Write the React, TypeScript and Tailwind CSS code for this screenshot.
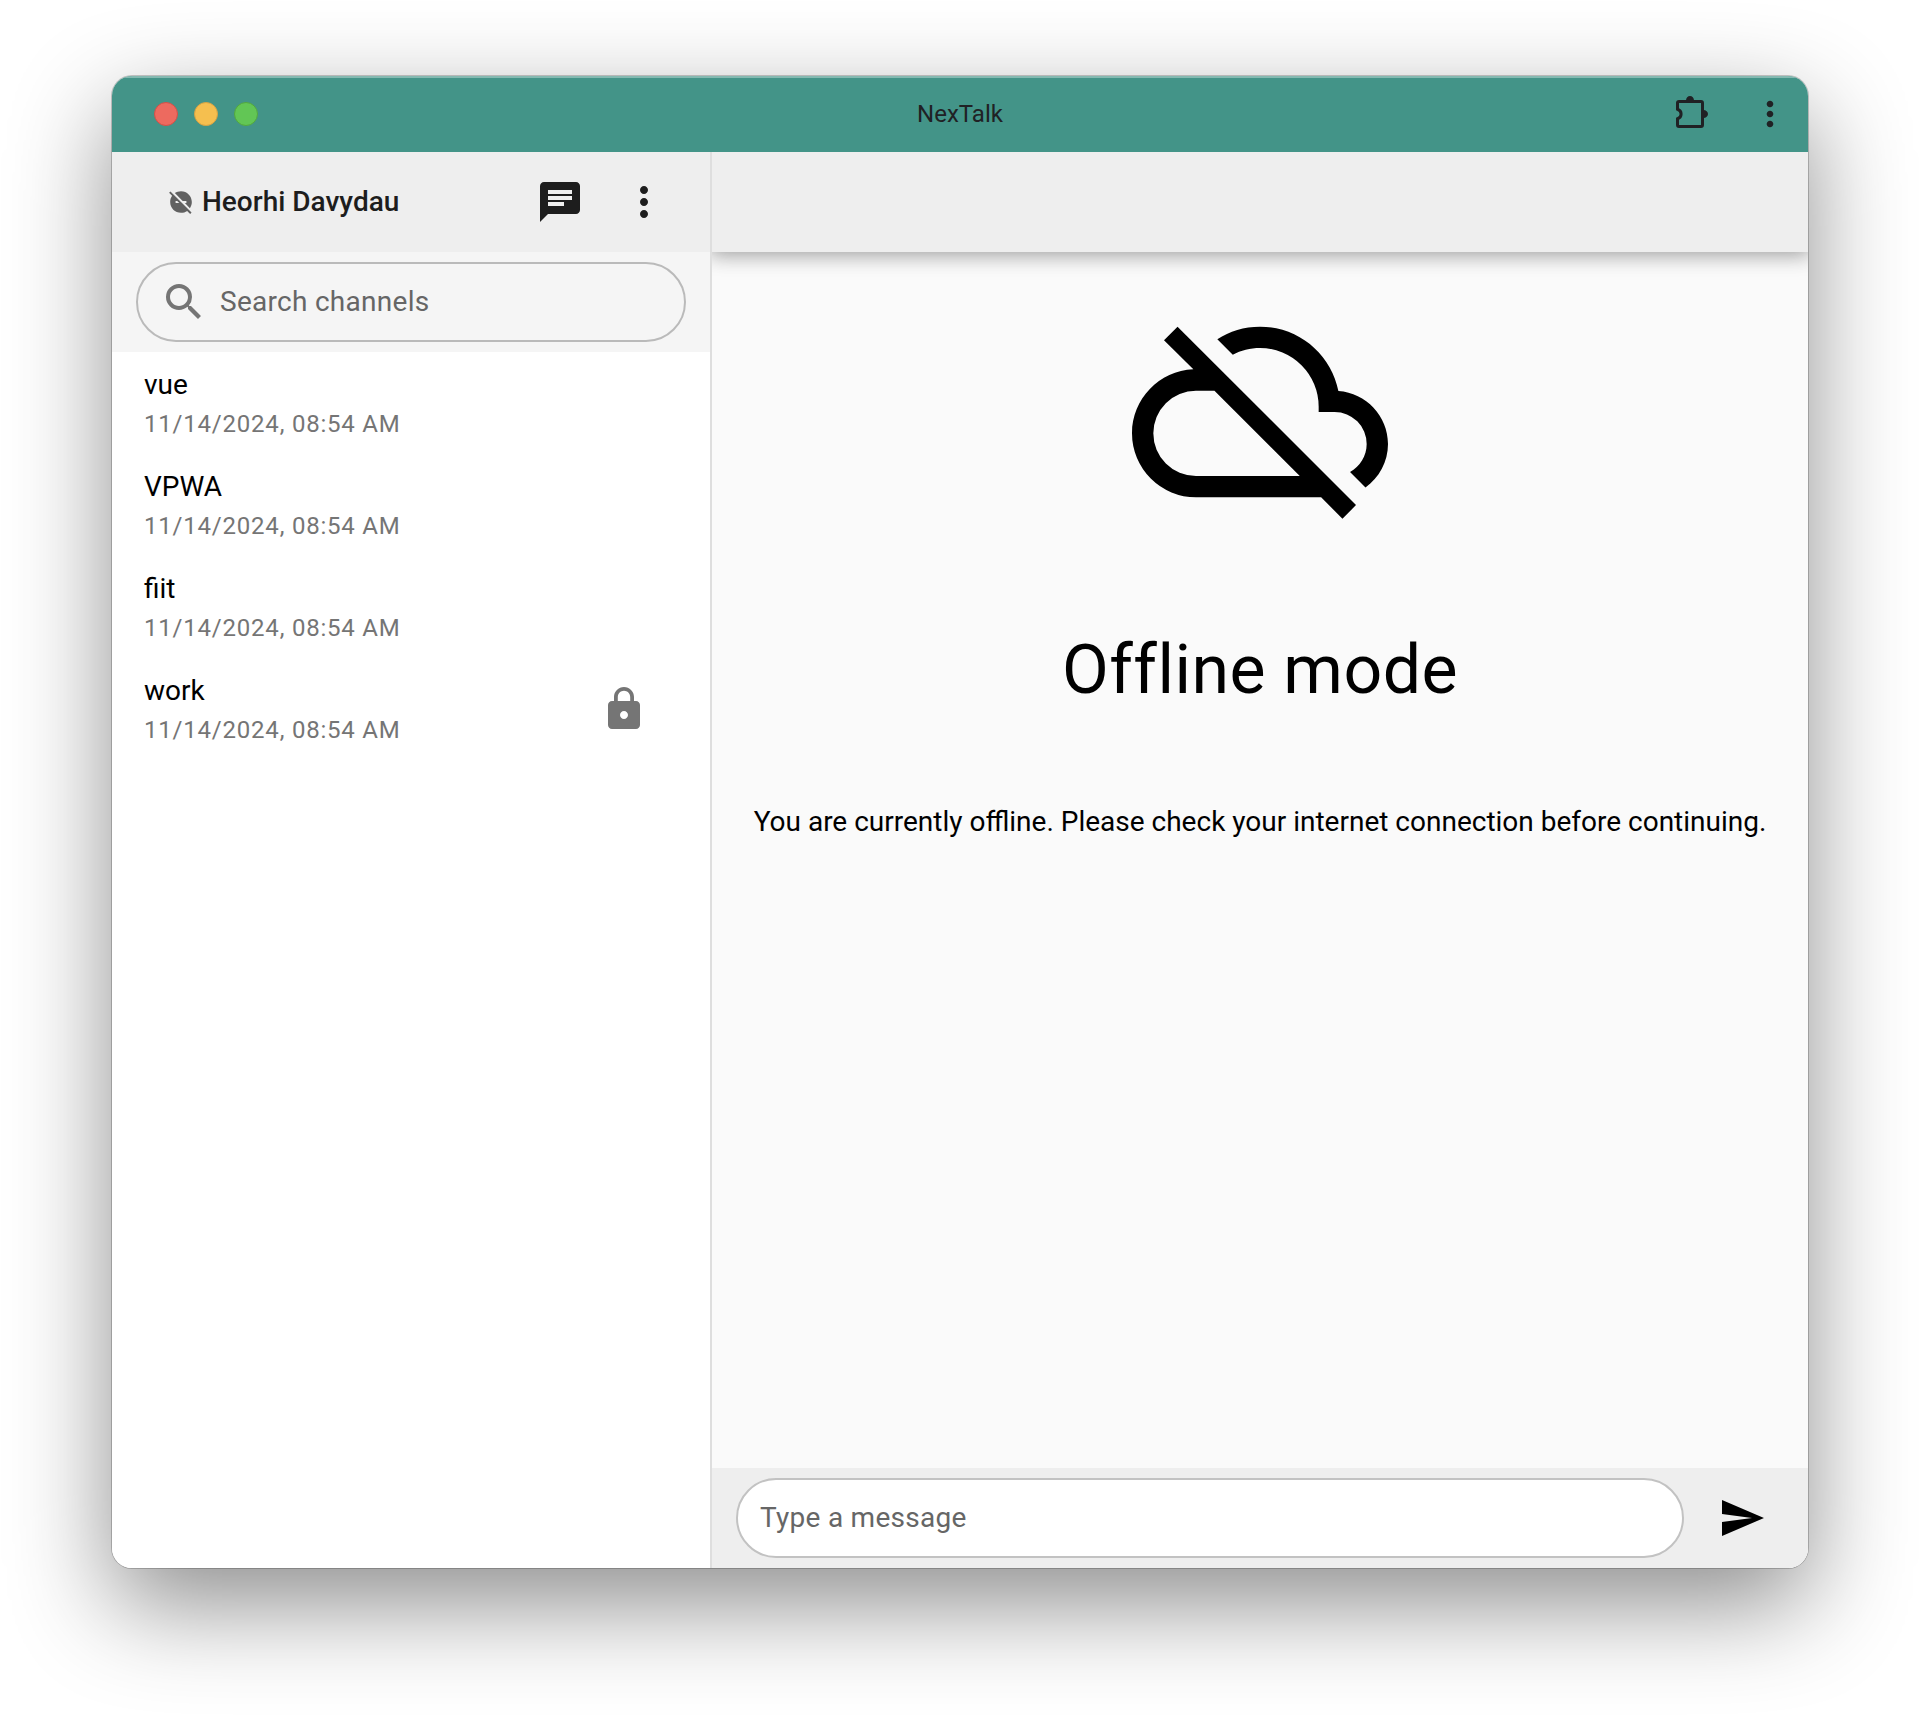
import type { ReactNode } from "react";

function Icon({ className, viewBox = "0 0 24 24", children }: { className: string; viewBox?: string; children: ReactNode }) {
  return (
    <svg className={className} viewBox={viewBox} fill="currentColor" aria-hidden="true">
      {children}
    </svg>
  );
}

const MoreVert = ({ className }: { className: string }) => (
  <Icon className={className}>
    <path d="M12 8c1.1 0 2-.9 2-2s-.9-2-2-2-2 .9-2 2 .9 2 2 2zm0 2c-1.1 0-2 .9-2 2s.9 2 2 2 2-.9 2-2-.9-2-2-2zm0 6c-1.1 0-2 .9-2 2s.9 2 2 2 2-.9 2-2-.9-2-2-2z" />
  </Icon>
);

const channels = [
  { name: "vue", date: "11/14/2024, 08:54 AM", locked: false },
  { name: "VPWA", date: "11/14/2024, 08:54 AM", locked: false },
  { name: "fiit", date: "11/14/2024, 08:54 AM", locked: false },
  { name: "work", date: "11/14/2024, 08:54 AM", locked: true },
];

function TitleBar() {
  return (
    <header className="grid h-[76px] shrink-0 grid-cols-[1fr_auto_1fr] items-center bg-[#439488] text-[#202124] shadow-[inset_0_2px_0_#84b9b1]">
      <div className="flex gap-4 pl-[42px]">
        <button aria-label="Close" className="size-6 rounded-full border border-[#d35047] bg-[#ed6a5f]" />
        <button aria-label="Minimize" className="size-6 rounded-full border border-[#d6a243] bg-[#f5bf4f]" />
        <button aria-label="Zoom" className="size-6 rounded-full border border-[#53a73e] bg-[#62c655]" />
      </div>
      <h1 className="text-2xl">NexTalk</h1>
      <div className="flex items-center justify-end gap-10 pr-[18px]">
        <button aria-label="Extensions">
          <Icon className="size-9" viewBox="0 0 36 36">
            <path
              d="M5 5.5H27a1.5 1.5 0 0 1 1.5 1.5V29a1.5 1.5 0 0 1-1.5 1.5H5A1.5 1.5 0 0 1 3.5 29V22.8a5 5 0 0 0 0-9.6V7A1.5 1.5 0 0 1 5 5.5Z"
              fill="none"
              stroke="currentColor"
              strokeWidth="3"
            />
            <path d="M12 4.5a4 4.5 0 0 1 8 0ZM29.5 14a4.5 4 0 0 1 0 8Z" />
          </Icon>
        </button>
        <button aria-label="Customize and control">
          <MoreVert className="size-10" />
        </button>
      </div>
    </header>
  );
}

function Sidebar() {
  return (
    <aside className="flex w-[600px] shrink-0 flex-col border-r-2 border-[#dedede] bg-white">
      <div className="flex h-[100px] shrink-0 items-center bg-[#eeeeee] pl-14 pr-[42px] text-[#1d1d1d]">
        <Icon className="size-[26px] text-[#616161]">
          <path d="M17 11v2h-1.46l4.68 4.68C21.34 16.07 22 14.11 22 12c0-5.52-4.48-10-10-10-2.11 0-4.07.66-5.68 1.78L13.54 11H17zM2.27 2.27 1 3.54l2.78 2.78C2.66 7.93 2 9.89 2 12c0 5.52 4.48 10 10 10 2.11 0 4.07-.66 5.68-1.78L20.46 23l1.27-1.27L2.27 2.27zM7 13v-2h1.46l2 2H7z" />
        </Icon>
        <h2 className="ml-2 grow text-[28px] leading-10 font-medium">Heorhi Davydau</h2>
        <button aria-label="New channel">
          <Icon className="size-12">
            <path d="M20 2H4c-1.1 0-1.99.9-1.99 2L2 22l4-4h14c1.1 0 2-.9 2-2V4c0-1.1-.9-2-2-2zM6 9h12v2H6V9zm8 5H6v-2h8v2zm4-6H6V6h12v2z" />
          </Icon>
        </button>
        <button aria-label="Menu" className="ml-9">
          <MoreVert className="size-12" />
        </button>
      </div>
      <div className="h-[100px] shrink-0 bg-[#f5f5f5] px-6 py-[10px]">
        <div className="flex h-20 items-center rounded-full border-2 border-[#bababa] px-[22px]">
          <Icon className="size-12 shrink-0 text-[#757575]">
            <path d="M15.5 14h-.79l-.28-.27A6.471 6.471 0 0 0 16 9.5 6.5 6.5 0 1 0 9.5 16c1.61 0 3.09-.59 4.23-1.57l.27.28v.79l5 4.99L20.49 19l-4.99-5zm-6 0C7.01 14 5 11.99 5 9.5S7.01 5 9.5 5 14 7.01 14 9.5 11.99 14 9.5 14z" />
          </Icon>
          <input
            type="text"
            aria-label="Search channels"
            placeholder="Search channels"
            className="ml-3 w-full min-w-0 bg-transparent text-[28px] tracking-[0.01em] outline-none placeholder:text-[#666666]"
          />
        </div>
      </div>
      <ul>
        {channels.map((channel) => (
          <li key={channel.name} className="flex min-h-[102px] items-center py-4 pl-8 pr-[62px]">
            <div className="grow">
              <p className="text-[28px] leading-[34px] text-black">{channel.name}</p>
              <p className="mt-2 text-2xl leading-7 tracking-[0.033em] text-[#757575]">{channel.date}</p>
            </div>
            {channel.locked && (
              <Icon className="size-12 text-[#757575]">
                <path d="M18 8h-1V6c0-2.76-2.24-5-5-5S7 3.24 7 6v2H6c-1.1 0-2 .9-2 2v10c0 1.1.9 2 2 2h12c1.1 0 2-.9 2-2V10c0-1.1-.9-2-2-2zm-6 9c-1.1 0-2-.9-2-2s.9-2 2-2 2 .9 2 2-.9 2-2 2zm3.1-9H8.9V6c0-1.71 1.39-3.1 3.1-3.1 1.71 0 3.1 1.39 3.1 3.1v2z" />
              </Icon>
            )}
          </li>
        ))}
      </ul>
    </aside>
  );
}

function Conversation() {
  return (
    <main className="flex min-w-0 grow flex-col overflow-hidden bg-[#fafafa]">
      <div className="z-10 h-[100px] shrink-0 bg-[#eeeeee] shadow-[0_0_20px_4px_rgba(0,0,0,0.2),0_0_20px_rgba(0,0,0,0.24)]" />
      <section className="flex grow flex-col items-center px-10 pt-8 text-black">
        <Icon className="size-64">
          <path d="M7.73 10 15.73 18H6A4 4 0 0 1 2 14 4 4 0 0 1 6 10M3 5.27 5.75 8C2.56 8.15 0 10.77 0 14A6 6 0 0 0 6 20H17.73L19.73 22 21 20.73 4.27 4M19.35 10.03C18.67 6.59 15.64 4 12 4 10.5 4 9.15 4.43 8 5.17L9.45 6.63C10.21 6.23 11.08 6 12 6A5.5 5.5 0 0 1 17.5 11.5V12H19A3 3 0 0 1 22 15C22 16.13 21.36 17.11 20.44 17.62L21.89 19.07C23.16 18.16 24 16.68 24 15 24 12.36 21.95 10.22 19.35 10.03Z" />
        </Icon>
        <h2 className="mt-[90px] text-[68px] leading-20 tracking-[0.007em]">Offline mode</h2>
        <p className="mt-[92px] text-[28px] leading-10">
          You are currently offline. Please check your internet connection before continuing.
        </p>
      </section>
      <form className="flex h-[100px] shrink-0 items-center bg-[#eeeeee] pl-6 pr-[42px]">
        <input
          type="text"
          aria-label="Message"
          placeholder="Type a message"
          className="h-20 min-w-0 grow rounded-full border-2 border-[#c2c2c2] bg-white px-[22px] pb-0.5 text-[28px] tracking-[0.01em] outline-none placeholder:text-[#666666]"
        />
        <button type="button" aria-label="Send" className="ml-[34px] text-black">
          <Icon className="size-12">
            <path d="M2.01 21 23 12 2.01 3 2 10l15 2-15 2z" />
          </Icon>
        </button>
      </form>
    </main>
  );
}

export default function App() {
  return (
    <div className="flex min-h-screen flex-col overflow-hidden bg-white px-28 pt-[76px] pb-[148px] font-['Roboto',sans-serif]">
      <div className="flex grow flex-col rounded-[20px] shadow-[0_0_0_1px_rgba(0,0,0,0.2),0_36px_100px_rgba(0,0,0,0.45)]">
        <div className="flex grow flex-col overflow-hidden rounded-[20px]">
          <TitleBar />
          <div className="flex grow">
            <Sidebar />
            <Conversation />
          </div>
        </div>
      </div>
    </div>
  );
}
